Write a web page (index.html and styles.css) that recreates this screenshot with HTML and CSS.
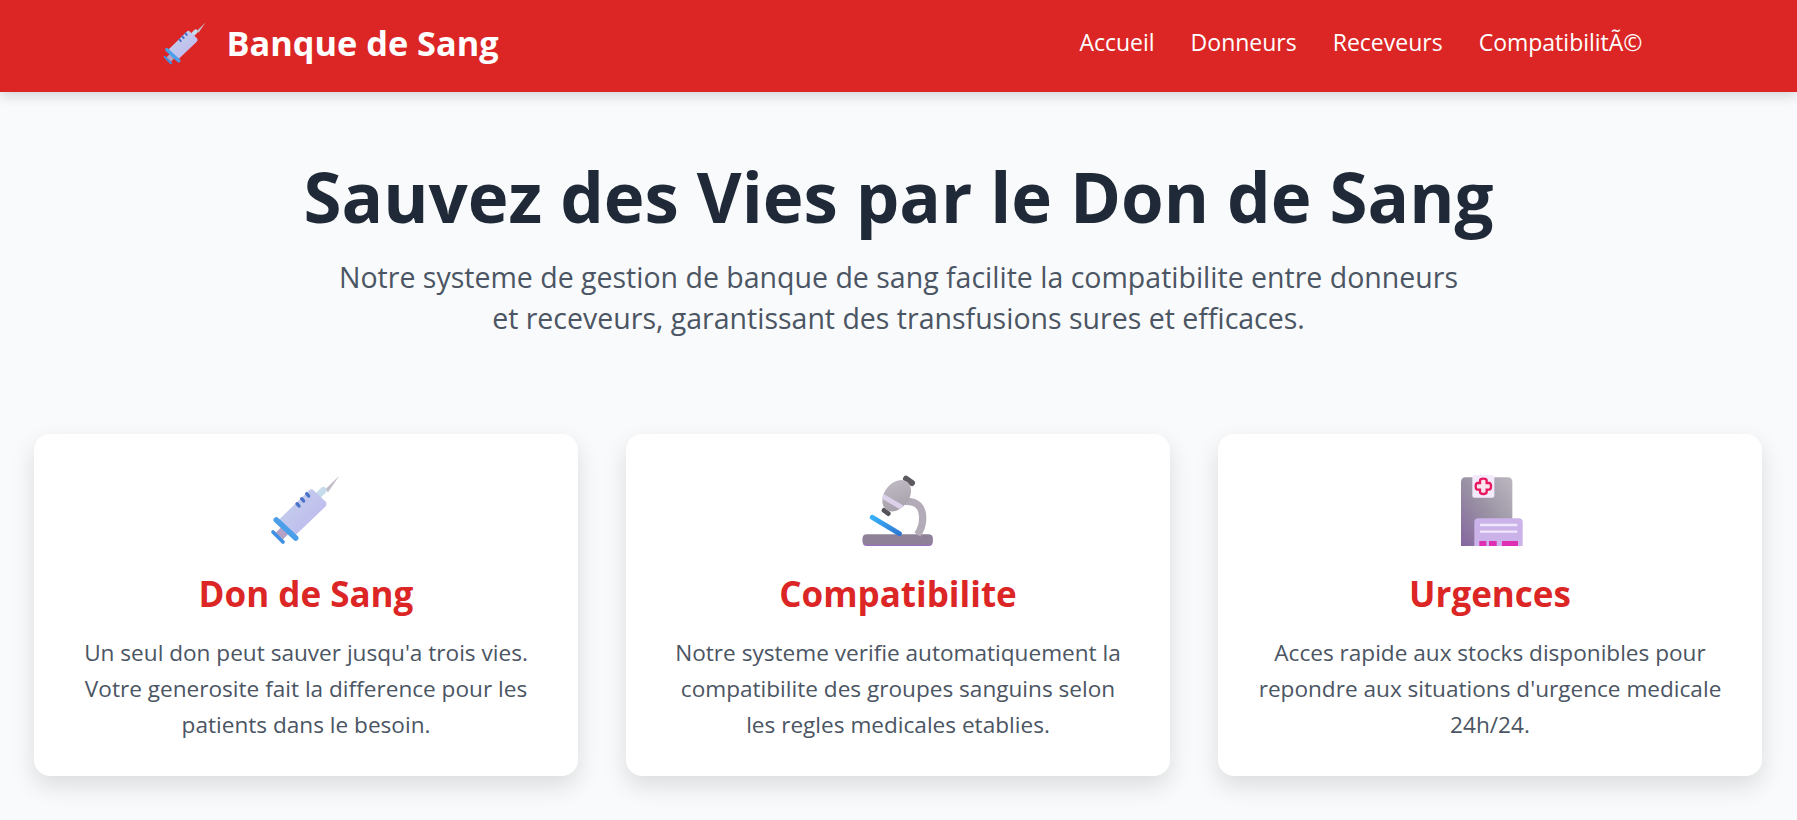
FILE: index.html
```html
<!DOCTYPE html>
<html lang="fr">
<head>
    <meta charset="UTF-8">
    <meta name="viewport" content="width=device-width, initial-scale=1.0">
    <title>Banque de Sang</title>
    <link rel="stylesheet" href="styles.css">
</head>
<body>
    <svg class="icon-defs" width="0" height="0">
        <defs>
            <linearGradient id="barrelGrad" x1="0" y1="0" x2="1" y2="1">
                <stop offset="0" stop-color="#c4d6ea"/>
                <stop offset="1" stop-color="#bfb2f0"/>
            </linearGradient>
            <linearGradient id="slideGrad" x1="0" y1="0" x2="1" y2="1">
                <stop offset="0" stop-color="#38b0f8"/>
                <stop offset="1" stop-color="#2f78d4"/>
            </linearGradient>
            <linearGradient id="bodyGrad" x1="0" y1="0" x2="1" y2="1">
                <stop offset="0" stop-color="#c2bdc6"/>
                <stop offset="1" stop-color="#a29ca6"/>
            </linearGradient>
            <linearGradient id="boardGrad" x1="0" y1="1" x2="1" y2="0">
                <stop offset="0" stop-color="#84669f"/>
                <stop offset="0.5" stop-color="#9a92a4"/>
                <stop offset="1" stop-color="#bcb8c0"/>
            </linearGradient>
            <clipPath id="bodyClip">
                <ellipse cx="170" cy="107" rx="37" ry="52" transform="rotate(37 170 107)"/>
            </clipPath>
            <symbol id="syringe" viewBox="60 40 215 215">
                <polygon points="226,88 268,47 234,97" fill="#c3bcc8"/>
                <line x1="208" y1="103" x2="220" y2="91" stroke="#c6dcec" stroke-width="20" stroke-linecap="round"/>
                <line x1="88" y1="228" x2="112" y2="204" stroke="#b7a2c6" stroke-width="30"/>
                <path d="M176 92 Q184 84 192 92 L226 124 Q233 132 226 140 L130 232 L82 184 Z" fill="url(#barrelGrad)"/>
                <line x1="79" y1="180" x2="137" y2="234" stroke="#4b9fe8" stroke-width="17" stroke-linecap="round"/>
                <line x1="69" y1="216" x2="99" y2="246" stroke="#3f8fe2" stroke-width="11" stroke-linecap="round"/>
                <g stroke="#4a72c8" stroke-width="10" stroke-linecap="round">
                    <line x1="170" y1="101" x2="176" y2="108"/>
                    <line x1="155" y1="116" x2="161" y2="123"/>
                    <line x1="141" y1="131" x2="147" y2="138"/>
                </g>
            </symbol>
        </defs>
    </svg>

    <nav class="navbar">
        <div class="nav-inner">
            <a class="brand" href="#">
                <svg class="brand-icon"><use href="#syringe"/></svg>
                <span>Banque de Sang</span>
            </a>
            <ul class="nav-links">
                <li><a href="#">Accueil</a></li>
                <li><a href="#">Donneurs</a></li>
                <li><a href="#">Receveurs</a></li>
                <li><a href="#">CompatibilitÃ©</a></li>
            </ul>
        </div>
    </nav>

    <header class="hero">
        <h1>Sauvez des Vies par le Don de Sang</h1>
        <p>Notre systeme de gestion de banque de sang facilite la compatibilite entre donneurs et receveurs, garantissant des transfusions sures et efficaces.</p>
    </header>

    <section class="cards">
        <article class="card">
            <svg class="card-icon" viewBox="3 0 330 300"><use href="#syringe" x="60" y="40" width="215" height="215"/></svg>
            <h3>Don de Sang</h3>
            <p>Un seul don peut sauver jusqu'a trois vies. Votre generosite fait la difference pour les patients dans le besoin.</p>
        </article>
        <article class="card">
            <svg class="card-icon" viewBox="9 0 330 300">
                <rect x="68" y="226" width="210" height="32" rx="12" fill="#9a6fbe"/>
                <rect x="68" y="223" width="210" height="31" rx="12" fill="#8f8298"/>
                <line x1="97" y1="172" x2="178" y2="221" stroke="url(#slideGrad)" stroke-width="15" stroke-linecap="round"/>
                <path d="M195 124 Q250 122 248 178 Q247 204 232 224" fill="none" stroke="#b4abb8" stroke-width="22"/>
                <line x1="198" y1="56" x2="216" y2="69" stroke="#5e5a62" stroke-width="18" stroke-linecap="round"/>
                <line x1="132" y1="151" x2="145" y2="161" stroke="#56525a" stroke-width="14" stroke-linecap="round"/>
                <ellipse cx="170" cy="107" rx="37" ry="52" transform="rotate(37 170 107)" fill="url(#bodyGrad)"/>
                <line x1="122" y1="105" x2="198" y2="150" stroke="#dcd0ea" stroke-width="15" clip-path="url(#bodyClip)"/>
            </svg>
            <h3>Compatibilite</h3>
            <p>Notre systeme verifie automatiquement la compatibilite des groupes sanguins selon les regles medicales etablies.</p>
        </article>
        <article class="card">
            <svg class="card-icon" viewBox="15 0 330 300">
                <path d="M93 258 V66 Q93 52 107 52 H233 Q247 52 247 66 V258 Z" fill="url(#boardGrad)"/>
                <rect x="127" y="45" width="66" height="68" rx="6" fill="#f3eafb"/>
                <path d="M150 62 Q150 56 160 56 Q170 56 170 62 V69 H177 Q183 69 183 79 Q183 89 177 89 H170 V96 Q170 102 160 102 Q150 102 150 96 V89 H143 Q137 89 137 79 Q137 69 143 69 H150 Z" fill="#fbe4ee" stroke="#e8185f" stroke-width="7"/>
                <path d="M133 258 V187 Q133 175 145 175 H266 Q278 175 278 187 V258 Z" fill="#cbb3ea"/>
                <g stroke="#f0e6fb" stroke-width="7">
                    <line x1="150" y1="195" x2="262" y2="195"/>
                    <line x1="150" y1="215" x2="262" y2="215"/>
                </g>
                <g fill="#df2fb2">
                    <rect x="148" y="243" width="21" height="15"/>
                    <rect x="177" y="243" width="23" height="15"/>
                    <rect x="216" y="243" width="48" height="15"/>
                </g>
            </svg>
            <h3>Urgences</h3>
            <p>Acces rapide aux stocks disponibles pour repondre aux situations d'urgence medicale 24h/24.</p>
        </article>
    </section>
</body>
</html>
```

FILE: styles.css
```css
* {
    margin: 0;
    padding: 0;
    box-sizing: border-box;
}

body {
    font-family: "Open Sans", "Noto Sans", Arial, sans-serif;
    background-color: #f9fafb;
    color: #4b5563;
    line-height: 1.7;
    height: 820px;
    overflow: hidden;
}

.icon-defs {
    display: block;
}

.navbar {
    background-color: #dc2626;
    height: 92px;
    box-shadow: 0 4px 12px rgba(0, 0, 0, 0.15);
    position: relative;
}

.nav-inner {
    max-width: 1536px;
    height: 100%;
    margin: auto;
    padding: 0 24px 6px 32px;
    display: flex;
    justify-content: space-between;
    align-items: center;
}

.brand {
    display: flex;
    align-items: center;
    gap: 20px;
    color: white;
    text-decoration: none;
    font-size: 34.3px;
    font-weight: 700;
}

.brand-icon {
    width: 44px;
    height: 44px;
}

.nav-links {
    list-style: none;
    display: flex;
    gap: 36px;
}

.nav-links a {
    color: white;
    text-decoration: none;
    font-size: 23px;
}

.hero {
    padding-top: 52px;
    text-align: center;
}

.hero h1 {
    font-size: 69px;
    font-weight: 700;
    line-height: 105px;
    color: #1f2937;
}

.hero p {
    max-width: 1135px;
    margin: 8px auto 0;
    font-size: 28.5px;
    line-height: 41px;
}

.cards {
    width: 1728px;
    margin: 95px 0 0 34px;
    display: grid;
    grid-template-columns: repeat(3, 1fr);
    gap: 48px;
}

.card {
    background: white;
    height: 342px;
    padding: 26px 38px 0;
    border-radius: 16px;
    box-shadow: 0 10px 25px rgba(0, 0, 0, 0.12);
    text-align: center;
}

.card-icon {
    display: block;
    width: 110px;
    height: 100px;
    margin: auto;
}

.card h3 {
    margin-top: 8px;
    font-size: 35px;
    font-weight: 700;
    line-height: 1.5;
    color: #dc2626;
}

.card p {
    margin-top: 14px;
    font-size: 22.6px;
    line-height: 36px;
}
```
